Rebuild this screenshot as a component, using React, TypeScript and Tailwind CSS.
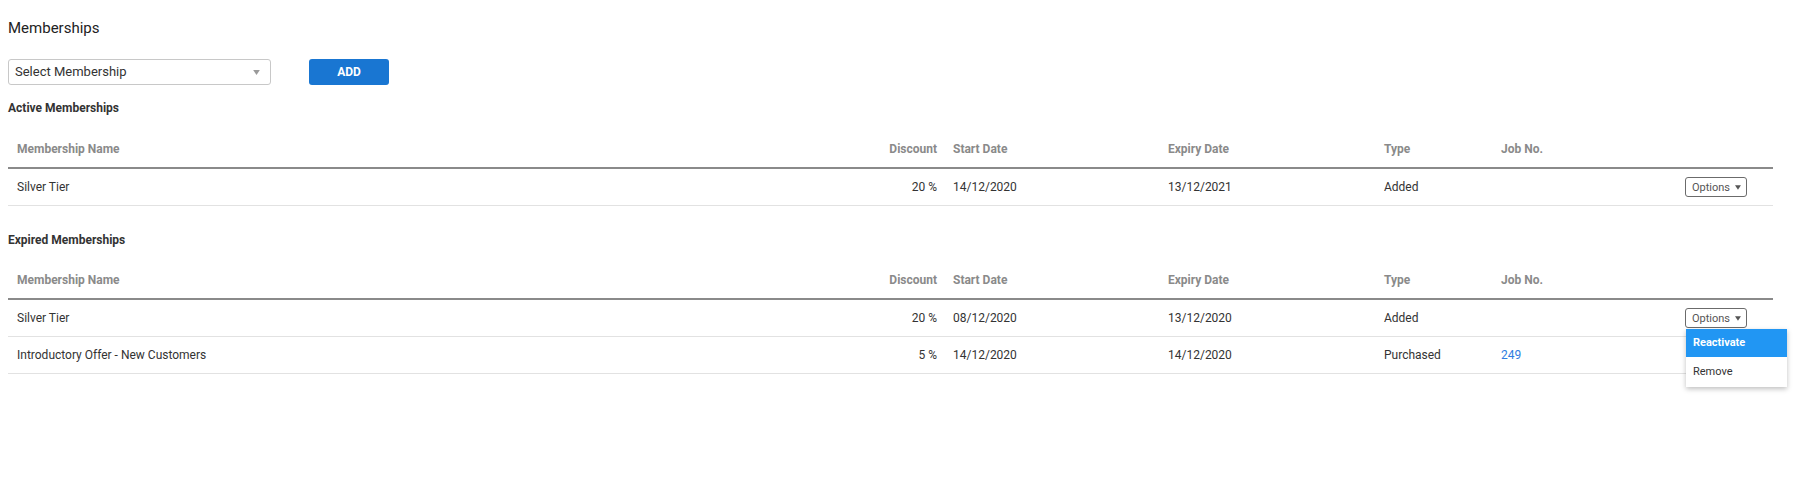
import React from "react";

type Row = {
  name: string;
  discount: string;
  start: string;
  expiry: string;
  type: string;
  job?: string;
  open?: boolean;
};

const cols = "grid grid-cols-[872px_65px_215px_216px_117px_167px_113px]";

function Caret({ className }: { className?: string }) {
  return (
    <svg width="8" height="6" viewBox="0 0 8 6" className={className}>
      <path d="M0 0 L8 0 L4 6 Z" fill="currentColor" />
    </svg>
  );
}

function OptionsButton({ open }: { open?: boolean }) {
  return (
    <div className="relative">
      <button className="flex items-center h-[20px] w-[62px] border border-[#6b6b6b] rounded-[3px] bg-white pl-[6px] pr-[5px] text-[11px] text-[#555] leading-none gap-[5px]">
        <span>Options</span>
        <Caret className="text-[#555] w-[7px] h-[5px]" />
      </button>
      {open && (
        <div className="absolute left-[1px] top-[21px] w-[101px] bg-white shadow-[0_2px_5px_rgba(0,0,0,0.25)] z-10 text-[11px]">
          <div className="h-[28px] flex items-center pl-[7px] bg-[#2196f3] text-white font-bold">Reactivate</div>
          <div className="h-[30px] flex items-center pl-[7px] text-[#333]">Remove</div>
        </div>
      )}
    </div>
  );
}

function Table({ rows }: { rows: Row[] }) {
  return (
    <div className="w-[1765px]">
      <div className={`${cols} h-[39px] border-b-2 border-[#8a8a8a] items-center text-[12px] font-bold text-[#8a8a8a]`}>
        <div className="pl-[9px]">Membership Name</div>
        <div className="text-right pr-[8px]">Discount</div>
        <div className="pl-[8px]">Start Date</div>
        <div className="pl-[8px]">Expiry Date</div>
        <div className="pl-[8px]">Type</div>
        <div className="pl-[8px]">Job No.</div>
        <div />
      </div>
      {rows.map((r, i) => (
        <div
          key={i}
          className={`${cols} h-[37px] border-b border-[#e2e2e2] items-center text-[12px] text-[#333]`}
        >
          <div className="pl-[9px]">{r.name}</div>
          <div className="text-right pr-[8px]">{r.discount}</div>
          <div className="pl-[8px]">{r.start}</div>
          <div className="pl-[8px]">{r.expiry}</div>
          <div className="pl-[8px]">{r.type}</div>
          <div className="pl-[8px] text-[#2f7de1]">{r.job ?? ""}</div>
          <div className="flex justify-end pr-[26px]">
            {i === 0 && <OptionsButton open={r.open} />}
          </div>
        </div>
      ))}
    </div>
  );
}

export default function App() {
  return (
    <div
      className="w-[1802px] h-[498px] bg-white px-[8px] text-[#333]"
      style={{ fontFamily: "Roboto, 'Liberation Sans', sans-serif" }}
    >
      <div className="pt-[18px] h-[38px] leading-[20px] text-[15px] text-[#222]">Memberships</div>
      <div className="mt-[21px] flex items-center">
        <div className="w-[263px] h-[26px] border border-[#c8c8c8] rounded-[3px] flex items-center justify-between pl-[6px] pr-[10px] text-[13px] text-[#333]">
          <span>Select Membership</span>
          <Caret className="text-[#9a9a9a] w-[7px] h-[5px]" />
        </div>
        <button className="ml-[38px] w-[80px] h-[26px] bg-[#1976d2] rounded-[3px] text-white text-[12px] font-bold">
          ADD
        </button>
      </div>
      <div className="mt-[15px] leading-[16px] text-[12px] font-bold text-[#333]">Active Memberships</div>
      <div className="mt-[14px]">
        <Table
          rows={[
            {
              name: "Silver Tier",
              discount: "20 %",
              start: "14/12/2020",
              expiry: "13/12/2021",
              type: "Added",
            },
          ]}
        />
      </div>
      <div className="mt-[26px] leading-[16px] text-[12px] font-bold text-[#333]">Expired Memberships</div>
      <div className="mt-[13px]">
        <Table
          rows={[
            {
              name: "Silver Tier",
              discount: "20 %",
              start: "08/12/2020",
              expiry: "13/12/2020",
              type: "Added",
              open: true,
            },
            {
              name: "Introductory Offer - New Customers",
              discount: "5 %",
              start: "14/12/2020",
              expiry: "14/12/2020",
              type: "Purchased",
              job: "249",
            },
          ]}
        />
      </div>
    </div>
  );
}
